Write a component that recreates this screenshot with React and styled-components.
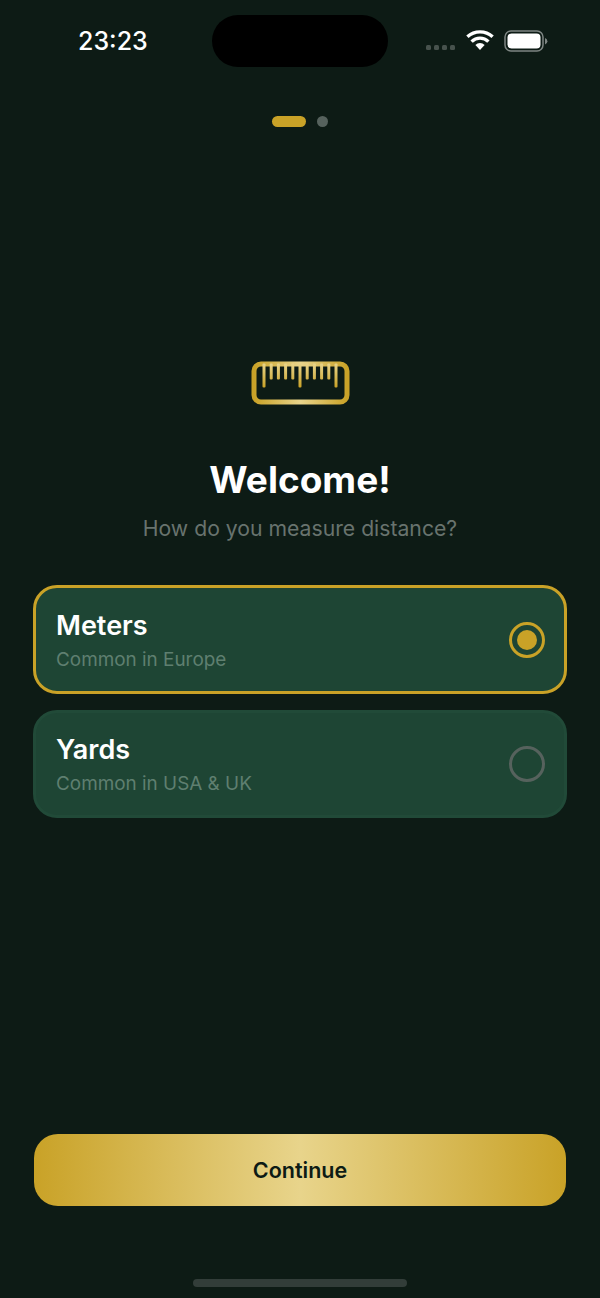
import { useState } from "react";
import styled, { createGlobalStyle } from "styled-components";

const Global = createGlobalStyle`
  html, body {
    margin: 0;
    padding: 0;
    background: #0d1b15;
  }
  * {
    box-sizing: border-box;
  }
`;

const Style = {
  Page: styled.div`
    width: 600px;
    height: 1298px;
    display: flex;
    flex-direction: column;
    align-items: center;
    overflow: hidden;
    background: #0d1b15;
    font-family: Inter, "Liberation Sans", sans-serif;
  `,
  StatusBar: styled.div`
    width: 100%;
    height: 52px;
    margin-top: 15px;
    display: grid;
    grid-template-columns: 212px 176px 212px;
  `,
  Time: styled.div`
    padding: 10px 0 0 78px;
    font-size: 25px;
    line-height: 32px;
    font-weight: 500;
    color: #ffffff;
  `,
  Island: styled.div`
    height: 52px;
    border-radius: 26px;
    background: #000000;
  `,
  StatusIcons: styled.div`
    display: flex;
    align-items: flex-start;
    padding: 16px 0 0 38px;
  `,
  Signal: styled.div`
    display: flex;
    gap: 3px;
    margin: 14px 11px 0 0;
  `,
  SignalDot: styled.span`
    width: 5px;
    height: 5px;
    border-radius: 1.5px;
    background: #47524d;
  `,
  Pager: styled.div`
    margin-top: 49px;
    display: flex;
    gap: 11px;
  `,
  PagerItem: styled.span`
    height: 11px;
    width: ${(p) => (p.$active ? "34px" : "11px")};
    border-radius: 6px;
    background: ${(p) => (p.$active ? "#c9a227" : "#56625d")};
  `,
  Ruler: styled.svg`
    display: block;
    margin-top: 234px;
  `,
  Title: styled.h1`
    margin: 52px 0 0;
    font-size: 37px;
    line-height: 46px;
    font-weight: 700;
    color: #ffffff;
  `,
  Subtitle: styled.p`
    margin: 12px 0 0;
    font-size: 21.2px;
    line-height: 26px;
    font-weight: 400;
    color: #68736e;
  `,
  Options: styled.div`
    width: 534px;
    margin-top: 44px;
    display: flex;
    flex-direction: column;
    gap: 16px;
  `,
  Option: styled.div`
    height: ${(p) => (p.$selected ? "109px" : "108px")};
    display: flex;
    align-items: center;
    justify-content: space-between;
    padding: 0 19px 0 20px;
    border-radius: 24px;
    background: #1e4534;
    border: 3px solid ${(p) => (p.$selected ? "#c9a227" : "#214a38")};
    cursor: pointer;
  `,
  OptionText: styled.div`
    display: flex;
    flex-direction: column;
    gap: 5px;
    padding-top: 1px;
  `,
  OptionName: styled.div`
    font-size: 27px;
    line-height: 34px;
    font-weight: 600;
    color: #ffffff;
  `,
  OptionHint: styled.div`
    font-size: 18.9px;
    line-height: 24px;
    color: #5f7f70;
  `,
  Radio: styled.div`
    width: 36px;
    height: 36px;
    display: flex;
    align-items: center;
    justify-content: center;
    border-radius: 50%;
    border: 3px solid ${(p) => (p.$selected ? "#c9a227" : "#56625d")};
  `,
  RadioDot: styled.span`
    width: 20px;
    height: 20px;
    border-radius: 50%;
    background: #c9a227;
  `,
  Spacer: styled.div`
    flex: 1;
  `,
  Continue: styled.button`
    width: 532px;
    height: 72px;
    border: none;
    border-radius: 24px;
    background: linear-gradient(90deg, #c9a227 0%, #e8d48b 50%, #c9a227 100%);
    font-family: inherit;
    font-size: 21.5px;
    font-weight: 600;
    color: #0d1b15;
    cursor: pointer;
  `,
  HomeBar: styled.div`
    width: 214px;
    height: 8px;
    margin: 73px 0 11px;
    border-radius: 4px;
    background: #323d39;
  `,
};

const OPTIONS = [
  { id: "m", name: "Meters", hint: "Common in Europe" },
  { id: "y", name: "Yards", hint: "Common in USA & UK" },
];

// tick bottoms, left to right
const TICKS = [388, 380, 380, 380, 380, 388, 380, 380, 380, 380, 388];

function RulerIcon() {
  return (
    <Style.Ruler width="100" height="44" viewBox="250 361.5 100 44">
      <defs>
        <linearGradient id="gold" x1="0" y1="0" x2="1" y2="0">
          <stop offset="0" stopColor="#c9a227" />
          <stop offset="0.5" stopColor="#e8d48b" />
          <stop offset="1" stopColor="#c9a227" />
        </linearGradient>
        <linearGradient id="tick" gradientUnits="userSpaceOnUse" x1="0" y1="364" x2="0" y2="388">
          <stop offset="0" stopColor="#e8d48b" />
          <stop offset="1" stopColor="#c9a227" />
        </linearGradient>
      </defs>
      <rect x="254" y="364.5" width="93" height="38" rx="7" fill="none" stroke="url(#gold)" strokeWidth="5" />
      {TICKS.map((bottom, i) => {
        const x = 264 + i * 7.2;
        return <rect key={i} x={x - 1.5} y="364" width="3" height={bottom - 364} rx="1" fill="url(#tick)" />;
      })}
    </Style.Ruler>
  );
}

function WifiIcon() {
  return (
    <svg width="28" height="21" viewBox="0 0 28 21" style={{ marginTop: -1 }}>
      <path d="M14 20l-4.6-5a6.4 6.4 0 0 1 9.2 0z" fill="#fff" />
      <path d="M5.6 11.6a12 12 0 0 1 16.8 0" fill="none" stroke="#fff" strokeWidth="3.4" />
      <path d="M1.4 6.8a18.5 18.5 0 0 1 25.2 0" fill="none" stroke="#fff" strokeWidth="3.4" />
    </svg>
  );
}

function BatteryIcon() {
  return (
    <svg width="44" height="22" viewBox="0 0 44 22" style={{ marginLeft: 10, marginTop: -1 }}>
      <rect x="1" y="1" width="38" height="20" rx="6" fill="none" stroke="#7d8582" strokeWidth="1.5" />
      <rect x="3.5" y="3.5" width="33" height="15" rx="4" fill="#fff" />
      <path d="M41 8a3.4 3.4 0 0 1 0 6.5z" fill="#7d8582" />
    </svg>
  );
}

function App() {
  const [selected, setSelected] = useState("m");

  return (
    <Style.Page>
      <Global />
      <Style.StatusBar>
        <Style.Time>23:23</Style.Time>
        <Style.Island />
        <Style.StatusIcons>
          <Style.Signal>
            <Style.SignalDot />
            <Style.SignalDot />
            <Style.SignalDot />
            <Style.SignalDot />
          </Style.Signal>
          <WifiIcon />
          <BatteryIcon />
        </Style.StatusIcons>
      </Style.StatusBar>
      <Style.Pager>
        <Style.PagerItem $active />
        <Style.PagerItem />
      </Style.Pager>
      <RulerIcon />
      <Style.Title>Welcome!</Style.Title>
      <Style.Subtitle>How do you measure distance?</Style.Subtitle>
      <Style.Options>
        {OPTIONS.map((o) => (
          <Style.Option key={o.id} $selected={selected === o.id} onClick={() => setSelected(o.id)}>
            <Style.OptionText>
              <Style.OptionName>{o.name}</Style.OptionName>
              <Style.OptionHint>{o.hint}</Style.OptionHint>
            </Style.OptionText>
            <Style.Radio $selected={selected === o.id}>
              {selected === o.id && <Style.RadioDot />}
            </Style.Radio>
          </Style.Option>
        ))}
      </Style.Options>
      <Style.Spacer />
      <Style.Continue>Continue</Style.Continue>
      <Style.HomeBar />
    </Style.Page>
  );
}

export default App;
